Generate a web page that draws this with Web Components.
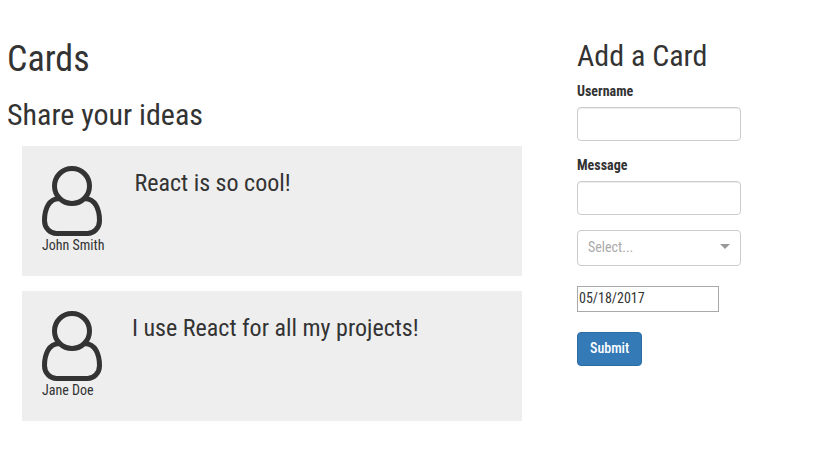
<!DOCTYPE html>
<html lang="en">
<head>
<meta charset="utf-8">
<title>Cards</title>
<style>
body{margin:0;background:#fff;color:#333;font:14px/18px "Roboto Condensed",Roboto,sans-serif}
</style>
</head>
<body>
<cards-app></cards-app>
<script>
const define = (name, html) => {
  const t = document.createElement('template');
  t.innerHTML = html;
  customElements.define(name, class extends HTMLElement {
    constructor() {
      super();
      this.attachShadow({mode: 'open'}).append(t.content.cloneNode(true));
    }
  });
};

define('user-icon', `
<style>:host{display:block;width:60px;height:70px}svg{display:block}</style>
<svg width="60" height="70" viewBox="0 0 60 70" fill="none" stroke="#333" stroke-width="5">
<circle cx="30" cy="20" r="17.5"/>
<path d="M17 32.7C7 32.5 2.5 43 2.5 54.5C2.5 62 8 67.5 14.5 67.5H45.5C52 67.5 57.5 62 57.5 54.5C57.5 43 53 32.5 43 32.7"/>
</svg>`);

define('idea-card', `
<style>
:host{display:flex;box-sizing:border-box;width:500px;height:130px;padding:20px;background:#eee}
.who{flex:none;white-space:nowrap}
h3{margin:4px 0 0 30px;font-size:24px;line-height:26px;font-weight:400;white-space:nowrap}
</style>
<div class="who"><user-icon></user-icon><slot name="author"></slot></div>
<h3><slot></slot></h3>`);

define('text-field', `
<style>
:host{display:block;margin-bottom:15px}
label{display:block;margin-bottom:7px;font-weight:700}
input{display:block;box-sizing:border-box;width:164px;height:34px;padding:6px 12px;border:1px solid #ccc;border-radius:4px;font:inherit;box-shadow:inset 0 1px 1px rgba(0,0,0,.075)}
</style>
<label><slot></slot></label><input>`);

define('select-box', `
<style>
:host{display:flex;box-sizing:border-box;width:164px;height:36px;align-items:center;justify-content:space-between;padding:0 10px;border:1px solid #ccc;border-radius:4px;color:#aaa}
span{margin-bottom:2px}
i{border:5px solid transparent;border-top-color:#999;border-bottom:0;margin-bottom:3px}
</style>
<span><slot></slot></span><i></i>`);

define('date-box', `
<style>
:host{display:block;box-sizing:border-box;width:142px;height:26px;margin:20px 0;padding:2px 1px;border:1px solid #a9a9a9}
</style><slot></slot>`);

define('submit-button', `
<style>
:host{display:block}
button{display:block;height:34px;padding:6px 12px 8px;border:1px solid #2e6da4;border-radius:4px;background:#337ab7;color:#fff;font:inherit;font-weight:500}
</style><button><slot></slot></button>`);

define('card-form', `
<style>
:host{display:block;width:164px}
h2{margin:0 0 10px;font-size:30px;line-height:33px;font-weight:400;white-space:nowrap}
</style>
<h2>Add a Card</h2>
<text-field>Username</text-field>
<text-field>Message</text-field>
<select-box>Select...</select-box>
<date-box>05/18/2017</date-box>
<submit-button>Submit</submit-button>`);

define('cards-app', `
<style>
:host{display:grid;grid-template-columns:515px 164px;column-gap:55px;padding:39px 0 0 7px}
h1,h2{margin:0;font-weight:400}
h1{font-size:36px;line-height:40px}
h2{margin-top:19px;font-size:30px;line-height:33px}
.list{display:flex;flex-direction:column;gap:15px;margin:15px 0 0 15px}
</style>
<main>
<h1>Cards</h1>
<h2>Share your ideas</h2>
<div class="list">
<idea-card><span slot="author">John Smith</span>React is so cool!</idea-card>
<idea-card><span slot="author">Jane Doe</span>I use React for all my projects!</idea-card>
</div>
</main>
<card-form></card-form>`);
</script>
</body>
</html>
